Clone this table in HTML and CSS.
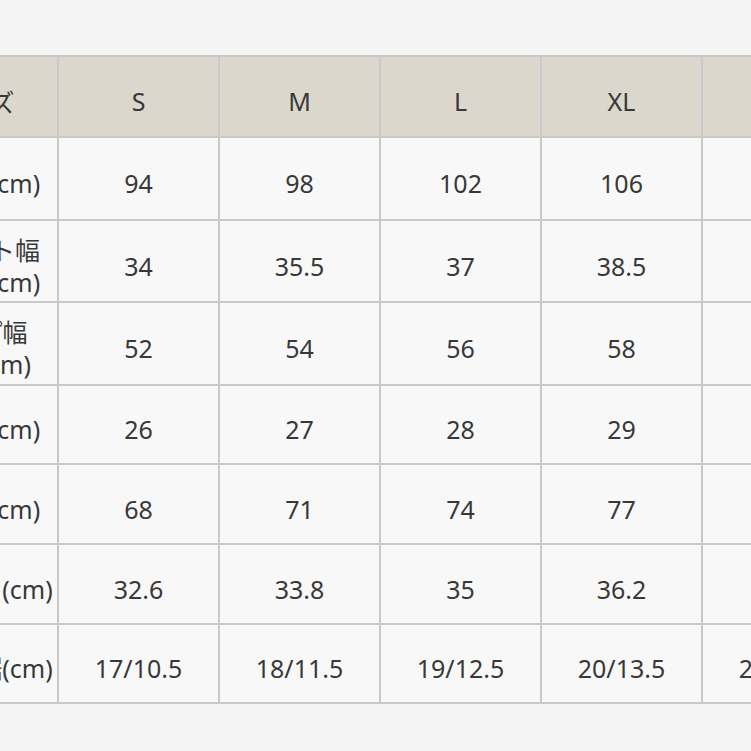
FILE: index.html
```html
<!DOCTYPE html>
<html lang="ja">
<head>
<meta charset="utf-8">
<title>サイズ表</title>
<link rel="stylesheet" href="styles.css">
</head>
<body>
<div class="size-table">
  <div class="cell head">サイズ</div>
  <div class="cell head">S</div>
  <div class="cell head">M</div>
  <div class="cell head">L</div>
  <div class="cell head">XL</div>
  <div class="cell head">XXL</div>

  <div class="cell label">バスト(cm)</div>
  <div class="cell">94</div>
  <div class="cell">98</div>
  <div class="cell">102</div>
  <div class="cell">106</div>
  <div class="cell">110</div>

  <div class="cell label">ウエスト幅<br>平置き(cm)</div>
  <div class="cell">34</div>
  <div class="cell">35.5</div>
  <div class="cell">37</div>
  <div class="cell">38.5</div>
  <div class="cell">40</div>

  <div class="cell label">ヒップ幅<br>平置 (cm)</div>
  <div class="cell">52</div>
  <div class="cell">54</div>
  <div class="cell">56</div>
  <div class="cell">58</div>
  <div class="cell">60</div>

  <div class="cell label">わたり(cm)</div>
  <div class="cell">26</div>
  <div class="cell">27</div>
  <div class="cell">28</div>
  <div class="cell">29</div>
  <div class="cell">30</div>

  <div class="cell label">総着丈(cm)</div>
  <div class="cell">68</div>
  <div class="cell">71</div>
  <div class="cell">74</div>
  <div class="cell">77</div>
  <div class="cell">80</div>

  <div class="cell label">股上深さ(cm)</div>
  <div class="cell">32.6</div>
  <div class="cell">33.8</div>
  <div class="cell">35</div>
  <div class="cell">36.2</div>
  <div class="cell">37.4</div>

  <div class="cell label">ひざ・裾(cm)</div>
  <div class="cell">17/10.5</div>
  <div class="cell">18/11.5</div>
  <div class="cell">19/12.5</div>
  <div class="cell">20/13.5</div>
  <div class="cell">21/14.5</div>
</div>
</body>
</html>
```

FILE: styles.css
```css
html, body {
  margin: 0;
  padding: 0;
  overflow: hidden;
  background: #f4f4f4;
}

body {
  font-family: "Noto Sans", "Noto Sans CJK JP", sans-serif;
  color: #383838;
  width: 751px;
  height: 751px;
}

.size-table {
  display: grid;
  grid-template-columns: repeat(6, 159px);
  grid-template-rows: 79px 81px 80px 81px 77px 78px 78px 77px;
  gap: 2px;
  padding: 2px;
  width: max-content;
  margin: 55px 0 0 -104px;
  background: #c9c9c9;
}

.cell {
  display: flex;
  align-items: center;
  justify-content: center;
  text-align: center;
  box-sizing: border-box;
  padding-top: 9px;
  background: #f8f8f8;
  font-size: 25px;
  white-space: nowrap;
}

.head {
  background: #dbd7cc;
}

.label {
  line-height: 32px;
}
```
